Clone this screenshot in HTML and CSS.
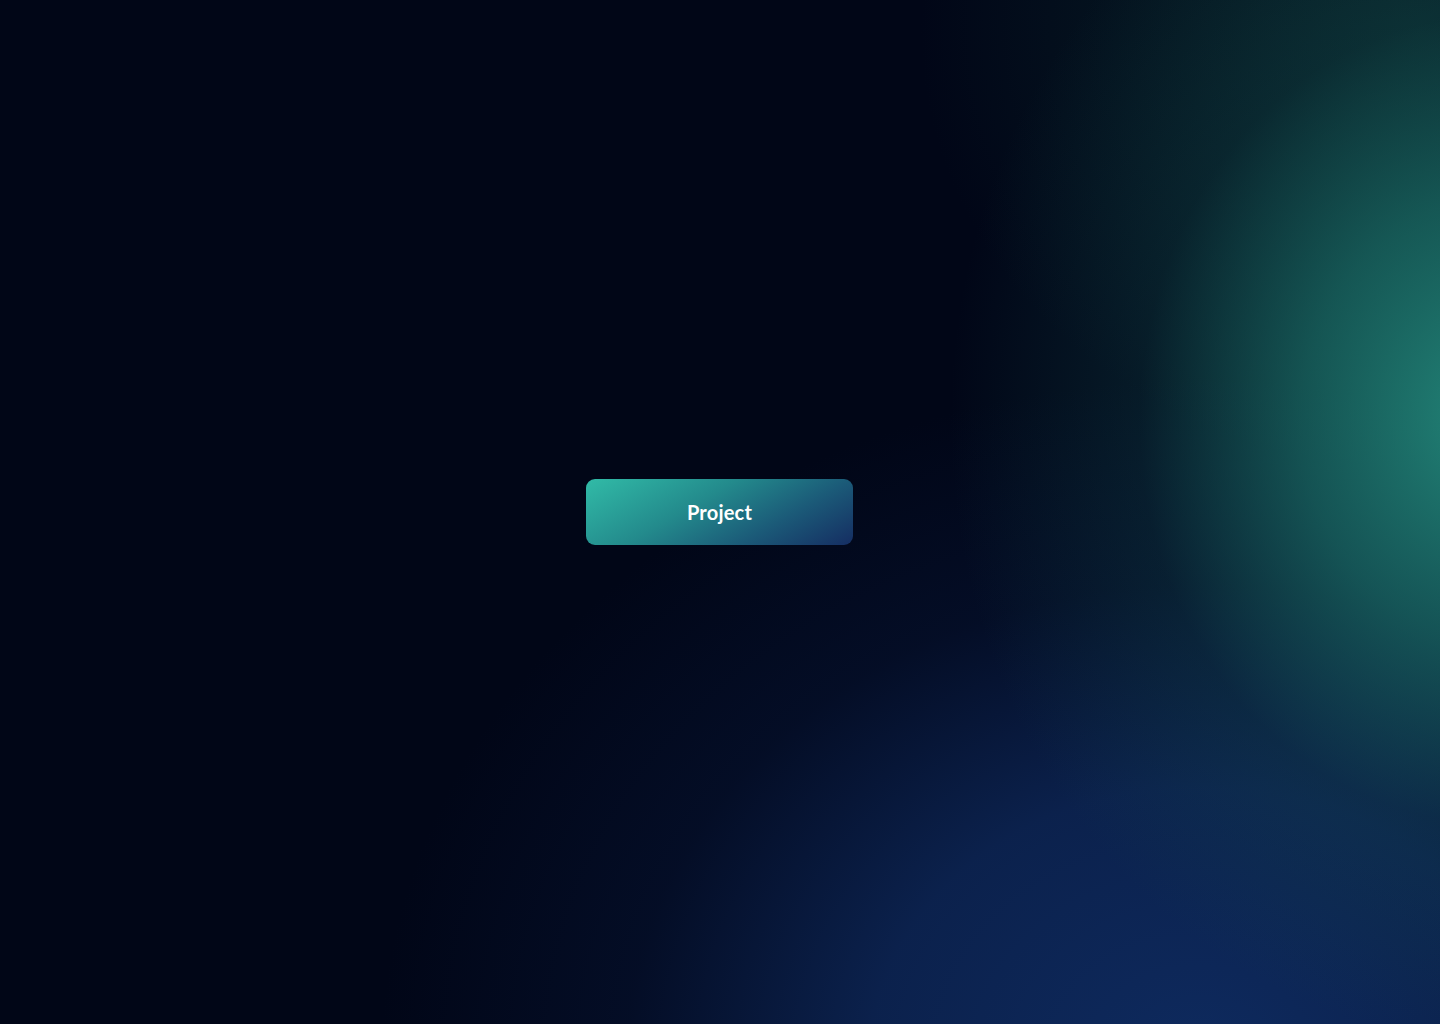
FILE: index.html
```html
<!DOCTYPE html>
<html lang="en">
<head>
<meta charset="utf-8">
<title>Project</title>
<link rel="stylesheet" href="styles.css">
</head>
<body>
<main class="stage">
  <button class="project-btn" type="button">Project</button>
</main>
</body>
</html>
```
FILE: styles.css
```css
html, body {
  margin: 0;
  padding: 0;
  height: 100%;
}
body {
  background-color: #010617;
  background-image:
    radial-gradient(ellipse 540px 620px at 1490px 420px, rgba(36,140,126,0.95) 0%, rgba(30,122,112,0.65) 35%, rgba(20,80,82,0.28) 65%, rgba(1,6,23,0) 100%),
    radial-gradient(ellipse 820px 680px at 1200px 1060px, rgba(14,42,94,1) 0%, rgba(13,38,86,0.85) 40%, rgba(8,24,60,0.4) 70%, rgba(1,6,23,0) 100%),
    radial-gradient(ellipse 500px 440px at 1420px 30px, rgba(12,50,50,0.7) 0%, rgba(1,6,23,0) 100%);
  background-repeat: no-repeat;
  font-family: "Lato", "Inter", "Liberation Sans", sans-serif;
}
.stage {
  min-height: 100vh;
  display: flex;
  align-items: center;
  justify-content: center;
}
.project-btn {
  width: 267px;
  height: 66px;
  margin-right: 1px;
  border: none;
  border-radius: 9px;
  background: linear-gradient(150deg, #31bba7 0%, #238a8c 40%, #1b5a78 70%, #152d62 100%);
  color: #ffffff;
  font-family: "Lato", "Inter", "Liberation Sans", sans-serif;
  font-weight: 700;
  font-size: 20px;
  line-height: 64px;
  letter-spacing: 0.2px;
  cursor: pointer;
  padding: 0;
}
```
